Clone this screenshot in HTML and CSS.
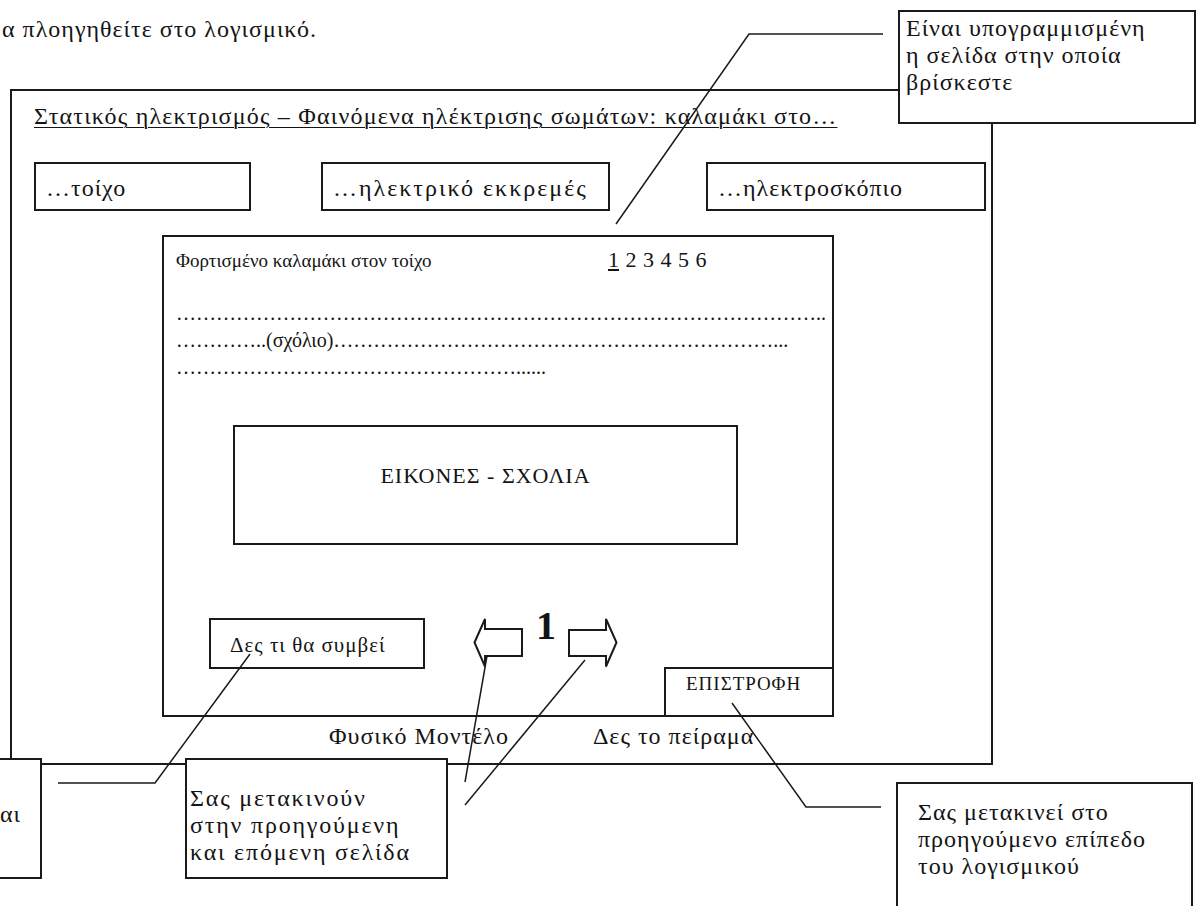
FILE: index.html
```html
<!DOCTYPE html>
<html lang="el">
<head>
    <meta charset="UTF-8">
    <meta name="viewport" content="width=device-width, initial-scale=1.0">
    <title>Πλοήγηση στο λογισμικό</title>
    <link rel="stylesheet" href="styles.css">
</head>
<body>

    <p class="intro">α πλοηγηθείτε στο λογισμικό.</p>

    <div class="screen">
        <div class="screen-title">Στατικός ηλεκτρισμός – Φαινόμενα ηλέκτρισης σωμάτων: καλαμάκι στο…</div>

        <div class="tabs">
            <div class="tab tab-wall">…τοίχο</div>
            <div class="tab tab-pendulum">…ηλεκτρικό εκκρεμές</div>
            <div class="tab tab-scope">…ηλεκτροσκόπιο</div>
        </div>

        <div class="panel">
            <div class="panel-head">
                <span class="panel-title">Φορτισμένο καλαμάκι στον τοίχο</span>
                <span class="pages"><u>1</u> 2 3 4 5 6</span>
            </div>

            <div class="notes">
                <div>……………………………………………………………………………………..</div>
                <div>…………..(σχόλιο)…………………………………………………………...</div>
                <div>……………………………………………......</div>
            </div>

            <div class="figure">ΕΙΚΟΝΕΣ - ΣΧΟΛΙΑ</div>

            <div class="panel-foot">
                <div class="see-btn">Δες τι θα συμβεί</div>
                <svg class="arrow arrow-prev" width="50" height="50" viewBox="0 0 50 50">
                    <path d="M1.5 24.5 L12 1 L12 11 L49 11 L49 38 L12 38 L12 48.5 Z"/>
                </svg>
                <span class="page-num">1</span>
                <svg class="arrow arrow-next" width="50" height="50" viewBox="0 0 50 50">
                    <path d="M1 12 L38 12 L38 1 L48.5 24.5 L38 48.5 L38 38 L1 38 Z"/>
                </svg>
                <div class="back">ΕΠΙΣΤΡΟΦΗ</div>
            </div>
        </div>

        <div class="screen-foot">
            <span>Φυσικό Μοντέλο</span>
            <span class="experiment">Δες το πείραμα</span>
        </div>
    </div>

    <!-- annotations around the screen -->
    <div class="callout callout-page">Είναι υπογραμμισμένη<br>η σελίδα στην οποία<br>βρίσκεστε</div>
    <div class="callout callout-see">αι</div>
    <div class="callout callout-nav">Σας μετακινούν<br>στην προηγούμενη<br>και επόμενη σελίδα</div>
    <div class="callout callout-back">Σας μετακινεί στο<br>προηγούμενο επίπεδο<br>του λογισμικού</div>

    <svg class="leaders" width="1198" height="906" viewBox="0 0 1198 906">
        <polyline points="883,34 749,34 616,224"/>
        <polyline points="250,654 155,783 58,783"/>
        <line x1="487" y1="656" x2="465" y2="782"/>
        <line x1="585" y1="660" x2="465" y2="805"/>
        <polyline points="732,703 806,807 881,807"/>
    </svg>

</body>
</html>
```

FILE: styles.css
```css
* {
    box-sizing: border-box;
}
body {
    margin: 0;
    width: 1198px;
    height: 906px;
    overflow: hidden;
    position: relative;
    background-color: #fff;
    color: #141414;
    font-family: "Liberation Serif", "Times New Roman", serif;
    font-size: 24px;
    line-height: 26px;
    letter-spacing: 1px;
}
.intro {
    height: 89px;
    margin: 0;
    padding: 16px 0 0 2px;
}
.screen {
    margin-left: 10px;
    width: 983px;
    height: 676px;
    border: 2px solid #1a1a1a;
    padding-top: 12px;
}
.screen-title {
    margin-left: 22px;
    letter-spacing: 1.2px;
    text-decoration: underline;
    text-decoration-thickness: 1px;
    text-underline-offset: 3px;
}
.tabs {
    display: flex;
    margin-top: 33px;
}
.tab {
    height: 49px;
    border: 2px solid #1a1a1a;
    padding: 4px 0 0 10px;
    line-height: 41px;
}
.tab-wall {
    margin-left: 22px;
    width: 217px;
}
.tab-pendulum {
    margin-left: 70px;
    width: 289px;
    letter-spacing: 2px;
}
.tab-scope {
    margin-left: 96px;
    width: 280px;
}
.panel {
    display: flex;
    flex-direction: column;
    margin: 24px 0 0 150px;
    width: 672px;
    height: 482px;
    border: 2px solid #1a1a1a;
    padding-top: 10px;
}
.panel-head {
    display: flex;
    align-items: baseline;
    padding-left: 12px;
    height: 26px;
}
.panel-title {
    width: 432px;
    font-size: 19px;
    letter-spacing: 0;
}
.pages {
    font-size: 22px;
    letter-spacing: 0;
    word-spacing: 1px;
}
.notes {
    margin-top: 27px;
    padding-left: 12px;
    font-size: 20px;
    line-height: 27px;
    letter-spacing: 0;
    white-space: nowrap;
}
.figure {
    margin: 44px 0 0 69px;
    width: 505px;
    height: 120px;
    border: 2px solid #1a1a1a;
    padding-top: 36px;
    text-align: center;
    font-size: 22px;
    letter-spacing: 1px;
}
.panel-foot {
    display: flex;
    align-items: flex-start;
    margin-top: 73px;
    height: 97px;
}
.see-btn {
    margin-left: 45px;
    width: 216px;
    height: 51px;
    border: 2px solid #1a1a1a;
    padding: 3px 0 0 19px;
    font-size: 21px;
    line-height: 44px;
    letter-spacing: 1px;
}
.arrow {
    flex: none;
}
.arrow path {
    fill: #fff;
    stroke: #1a1a1a;
    stroke-width: 2;
}
.arrow-prev {
    margin-left: 48px;
}
.page-num {
    margin: -12px 0 0 13px;
    width: 20px;
    font-size: 40px;
    font-weight: bold;
    line-height: 40px;
    letter-spacing: 0;
}
.arrow-next {
    margin-left: 12px;
}
.back {
    align-self: flex-end;
    margin-left: auto;
    width: 168px;
    height: 48px;
    border-top: 2px solid #1a1a1a;
    border-left: 2px solid #1a1a1a;
    padding: 4px 0 0 20px;
    font-size: 19px;
    line-height: 22px;
    letter-spacing: 1px;
}
.screen-foot {
    display: flex;
    margin-top: 6px;
    padding-left: 317px;
}
.experiment {
    margin-left: 84px;
}
.callout {
    position: absolute;
    background-color: #fff;
    border: 2px solid #1a1a1a;
    line-height: 27px;
    white-space: nowrap;
}
.callout-page {
    left: 898px;
    top: 10px;
    width: 298px;
    height: 114px;
    padding: 3px 0 0 6px;
}
.callout-see {
    left: -20px;
    top: 758px;
    width: 62px;
    height: 121px;
    padding: 41px 0 0 18px;
}
.callout-nav {
    left: 185px;
    top: 758px;
    width: 263px;
    height: 121px;
    padding: 25px 0 0 3px;
    letter-spacing: 1.8px;
}
.callout-back {
    left: 896px;
    top: 782px;
    width: 297px;
    height: 140px;
    padding: 15px 0 0 20px;
}
.leaders {
    position: absolute;
    left: 0;
    top: 0;
    pointer-events: none;
}
.leaders polyline,
.leaders line {
    fill: none;
    stroke: #1a1a1a;
    stroke-width: 1.5;
}
```
